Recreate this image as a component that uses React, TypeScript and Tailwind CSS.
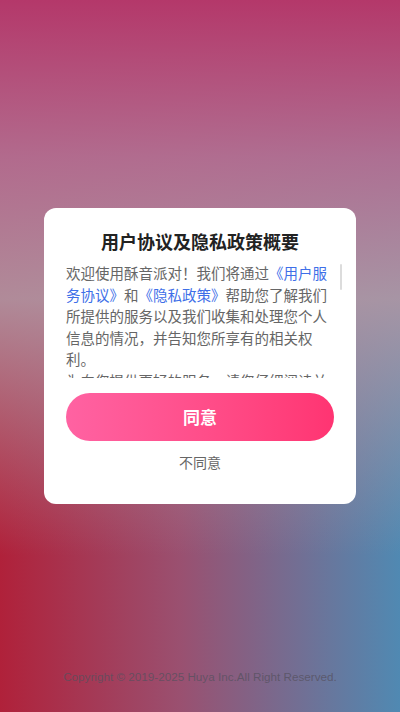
export default function App() {
  return (
    <div
      className="relative flex h-[712px] w-full items-center justify-center overflow-hidden bg-[linear-gradient(to_bottom,rgba(180,56,106,1)_0%,rgba(178,110,145,0.95)_22%,rgba(176,150,163,0.9)_42%,rgba(176,150,163,0)_78%),linear-gradient(to_right,#b0213a_0%,#9a5070_45%,#5089b2_100%)]"
      style={{ fontFamily: '"Noto Sans CJK SC", "Noto Sans", sans-serif' }}
    >
      {/* Dialog */}
      <div className="w-[312px] rounded-[12px] bg-white px-[22px] pb-[32px] pt-[20px]">
        <h2 className="text-center text-[18px] font-bold leading-[26px] text-[#222]">
          用户协议及隐私政策概要
        </h2>

        <div className="relative mt-[8px]">
          <div className="h-[116px] overflow-hidden text-[14.5px] leading-[21.6px] text-[#666]">
            <p>
              欢迎使用酥音派对！我们将通过
              <span className="text-[#3e6fe8]">《用户服务协议》</span>和
              <span className="text-[#3e6fe8]">《隐私政策》</span>
              帮助您了解我们所提供的服务以及我们收集和处理您个人信息的情况，并告知您所享有的相关权利。
            </p>
            <p>
              为向您提供更好的服务，请您仔细阅读并充分理解上述协议的全部内容，特别是以粗体标注的条款。
            </p>
          </div>
          <div className="absolute right-[-8px] top-[2px] h-[26px] w-[2px] rounded-full bg-[#dcdcdc]" />
        </div>

        <button className="mt-[15px] h-[48px] w-full rounded-full bg-gradient-to-r from-[#ff62a2] to-[#ff3472] text-[17px] font-bold text-white">
          同意
        </button>
        <div className="mt-[11px] text-center text-[14px] leading-[20px] text-[#666]">
          不同意
        </div>
      </div>

      {/* Footer */}
      <p
        className="absolute bottom-[26px] left-0 right-0 text-center text-[11.7px] text-[#55505e]/75"
        style={{ fontFamily: '"Liberation Sans", Arial, sans-serif' }}
      >
        Copyright © 2019-2025 Huya Inc.All Right Reserved.
      </p>
    </div>
  );
}
